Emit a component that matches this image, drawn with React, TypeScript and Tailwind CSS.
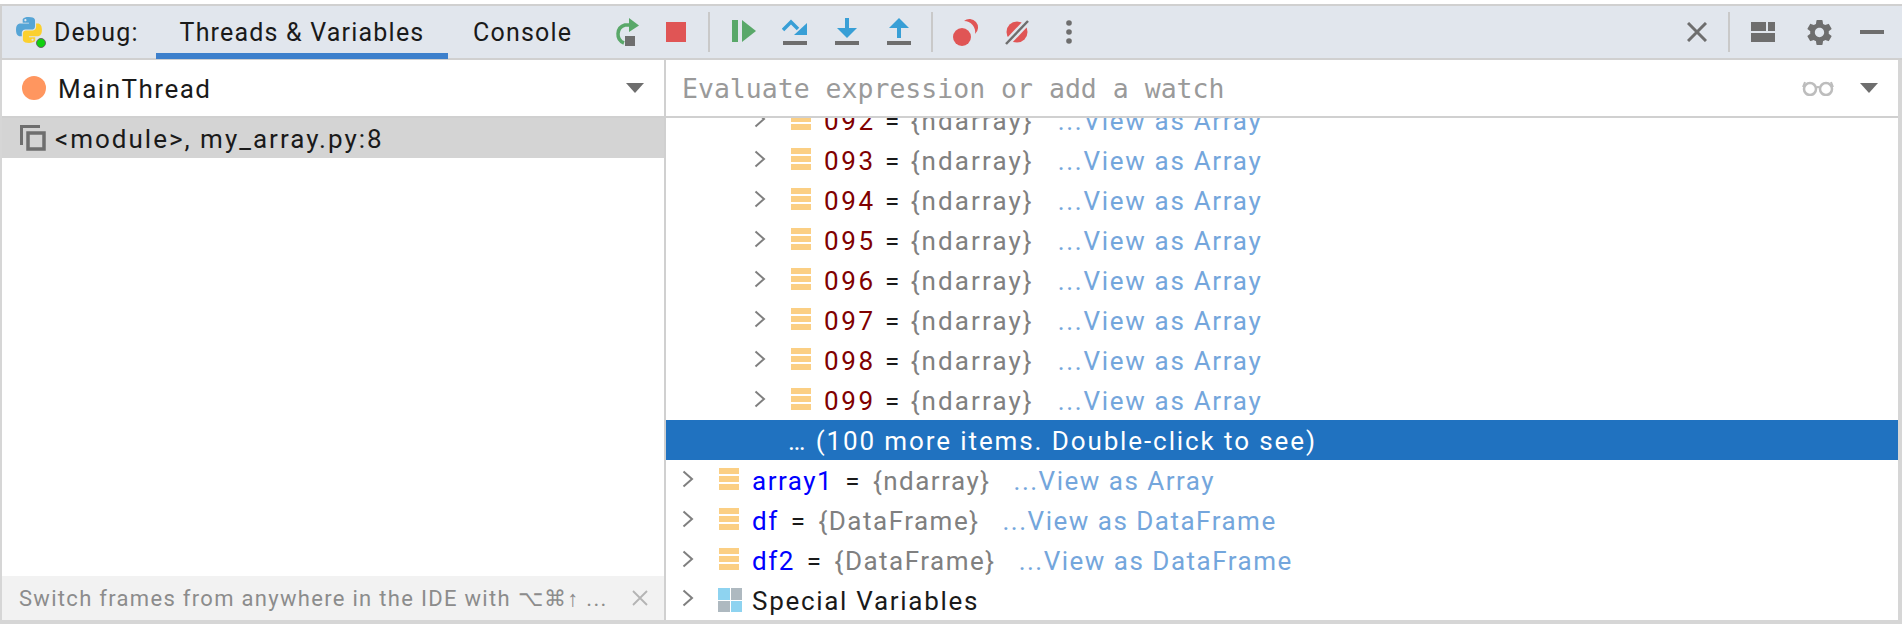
import { MdSettings } from "react-icons/md";

const Chevron = () => (
  <svg width="12" height="18" viewBox="0 0 12 18" className="shrink-0 -mt-[4px]">
    <path d="M1.5 1.5 L10 9 L1.5 16.5" fill="none" stroke="#7f7f7f" strokeWidth="2" />
  </svg>
);

const FieldIcon = () => (
  <div className="flex flex-col gap-[2px] w-5 shrink-0 -mt-[4px]">
    <div className="h-[6px] bg-[#fbcf84]" />
    <div className="h-[6px] bg-[#fbcf84]" />
    <div className="h-[6px] bg-[#fbcf84]" />
  </div>
);

const Triangle = () => (
  <svg width="18" height="10" viewBox="0 0 18 10" className="shrink-0">
    <path d="M0 0 H18 L9 10 Z" fill="#6e6e6e" />
  </svg>
);

const Sep = ({ className }: { className: string }) => <div className={`w-[2px] h-10 bg-[#c9c9c9] shrink-0 ${className}`} />;

const items = ["093", "094", "095", "096", "097", "098", "099"];

const topVars = [
  { name: "array1", type: "{ndarray}", link: "...View as Array" },
  { name: "df", type: "{DataFrame}", link: "...View as DataFrame" },
  { name: "df2", type: "{DataFrame}", link: "...View as DataFrame" },
];

function VarRow({ name, type, link, nameColor, nested }: { name: string; type: string; link: string; nameColor: string; nested?: boolean }) {
  return (
    <div className={`flex items-center h-10 shrink-0 pt-[2px] whitespace-nowrap ${nested ? "pl-[88px]" : "pl-[16px]"}`}>
      <Chevron />
      <div className="ml-[25px]"><FieldIcon /></div>
      <span className={`ml-[13px] ${nameColor} ${nested ? "tracking-[2.7px]" : ""}`}>{name}</span>
      <span className={`text-[#1a1a1a] ${nested ? "ml-[9px]" : "ml-3"}`}>=</span>
      <span className={`text-[#808080] ${nested ? "ml-[10px] tracking-[2.1px]" : "ml-3"}`}>{type}</span>
      <span className={`text-[#74a6dc] ${nested ? "ml-[24px] tracking-[1.7px]" : "ml-[23px]"}`}>{link}</span>
    </div>
  );
}

export default function App() {
  return (
    <div className="w-[1902px] h-[624px] overflow-hidden bg-white pt-1 font-['Roboto',sans-serif] text-[26px] tracking-[1.5px] text-[#1a1a1a] flex flex-col">
      {/* toolbar */}
      <div className="h-14 shrink-0 flex items-center bg-[#e1e6ed] border-y-2 border-y-[#d0d0d0] border-l-2 border-l-[#d0d0d0] text-[25px] tracking-[1.2px] whitespace-nowrap">
        <svg width="30" height="31" viewBox="0 0 30 31" className="ml-[14px] shrink-0">
          <g transform="scale(1.08)">
            <path fillRule="evenodd" fill="#56a5d6" d="M11.9 0C5.8 0 6.2 2.6 6.2 2.6v2.7h5.8v.8H3.9S0 5.7 0 11.9s3.4 6 3.4 6h2v-2.9s-.1-3.4 3.3-3.4h5.7s3.2.1 3.2-3.1V3.2S18.1 0 11.9 0zM8.7 1.9c.6 0 1 .5 1 1s-.5 1-1 1-1-.5-1-1 .4-1 1-1z" />
            <path fillRule="evenodd" fill="#fbd02f" transform="rotate(180 12 12)" d="M11.9 0C5.8 0 6.2 2.6 6.2 2.6v2.7h5.8v.8H3.9S0 5.7 0 11.9s3.4 6 3.4 6h2v-2.9s-.1-3.4 3.3-3.4h5.7s3.2.1 3.2-3.1V3.2S18.1 0 11.9 0zM8.7 1.9c.6 0 1 .5 1 1s-.5 1-1 1-1-.5-1-1 .4-1 1-1z" />
          </g>
          <circle cx="25" cy="26" r="4.5" fill="#10d010" stroke="#666" strokeWidth="1" />
        </svg>
        <span className="ml-[8px] w-[102px] shrink-0 pt-[2px]">Debug:</span>
        <div className="w-[292px] h-[52px] shrink-0 flex items-center justify-center border-b-[6px] border-b-[#3d80cc] pt-[6px] -mb-[2px]">Threads &amp; Variables</div>
        <span className="ml-[25px] w-[97px] shrink-0 pt-[2px]">Console</span>

        <svg width="28" height="28" viewBox="0 0 28 28" className="ml-[41px] shrink-0">
          <path d="M13 25 A9.5 9.5 0 0 1 14 7 H20" fill="none" stroke="#59a869" strokeWidth="3.5" />
          <path d="M18 0 L28 7.5 L18 14 Z" fill="#59a869" />
          <rect x="14" y="18" width="10" height="10" fill="#6e6e6e" />
        </svg>
        <svg width="20" height="20" viewBox="0 0 20 20" className="ml-[27px] shrink-0"><rect width="20" height="20" fill="#e05555" /></svg>
        <Sep className="ml-[22px]" />

        <svg width="24" height="24" viewBox="0 0 24 24" className="ml-[22px] shrink-0">
          <rect x="0" y="0" width="6" height="22" fill="#59a869" />
          <path d="M10 0 L24 11 L10 22 Z" fill="#59a869" />
        </svg>
        <svg width="26" height="28" viewBox="0 0 26 28" className="ml-[26px] shrink-0">
          <path d="M1 12 L9 4 L16 11" fill="none" stroke="#389fd6" strokeWidth="3.5" />
          <path d="M25 5 V17 H12 Z" fill="#389fd6" />
          <rect x="1" y="23" width="24" height="4" fill="#6e6e6e" />
        </svg>
        <svg width="24" height="28" viewBox="0 0 24 28" className="ml-[27px] shrink-0">
          <rect x="10" y="0" width="4" height="12" fill="#389fd6" />
          <path d="M2 10 H22 L12 20 Z" fill="#389fd6" />
          <rect x="0" y="23" width="24" height="4" fill="#6e6e6e" />
        </svg>
        <svg width="24" height="28" viewBox="0 0 24 28" className="ml-[28px] shrink-0">
          <path d="M2 10 H22 L12 0 Z" fill="#389fd6" />
          <rect x="10" y="8" width="4" height="12" fill="#389fd6" />
          <rect x="0" y="23" width="24" height="4" fill="#6e6e6e" />
        </svg>
        <Sep className="ml-[20px]" />

        <svg width="26" height="28" viewBox="0 0 26 28" className="ml-[20px] shrink-0">
          <path d="M11 3 A8 8 0 1 1 22 16 A11 11 0 0 0 11 3 Z" fill="#e05555" />
          <circle cx="9" cy="19" r="9" fill="#e05555" />
        </svg>
        <svg width="24" height="26" viewBox="0 0 24 26" className="ml-[26px] shrink-0">
          <circle cx="12" cy="13" r="10.5" fill="#e05555" />
          <path d="M2 24 L22 3" stroke="#e1e6ed" strokeWidth="7" />
          <path d="M1 25 L23 2" stroke="#6e6e6e" strokeWidth="2.5" />
        </svg>
        <svg width="6" height="24" viewBox="0 0 6 24" className="ml-[37px] shrink-0">
          <circle cx="3" cy="3" r="2.8" fill="#6e6e6e" />
          <circle cx="3" cy="12" r="2.8" fill="#6e6e6e" />
          <circle cx="3" cy="21" r="2.8" fill="#6e6e6e" />
        </svg>

        <svg width="20" height="20" viewBox="0 0 20 20" className="ml-auto shrink-0">
          <path d="M1 1 L19 19 M19 1 L1 19" stroke="#6e6e6e" strokeWidth="3" />
        </svg>
        <Sep className="ml-[21px]" />
        <svg width="24" height="20" viewBox="0 0 24 20" className="ml-[21px] shrink-0">
          <rect x="0" y="0" width="15" height="9" fill="#6e6e6e" />
          <rect x="17" y="0" width="7" height="9" fill="#6e6e6e" />
          <rect x="0" y="11" width="24" height="9" fill="#6e6e6e" />
        </svg>
        <MdSettings className="ml-[29px] shrink-0 text-[#6e6e6e]" size={31} />
        <div className="ml-[25px] mr-[18px] w-6 h-1 bg-[#6e6e6e] shrink-0" />
      </div>

      <div className="flex-1 min-h-0 flex border-l-2 border-r-4 border-b-4 border-[#d6d6d6] whitespace-nowrap">
        {/* frames */}
        <div className="w-[664px] shrink-0 flex flex-col border-r-2 border-r-[#d0d0d0]">
          <div className="h-[58px] shrink-0 flex items-center border-b-2 border-b-[#d0d0d0] pl-5 pr-[20px]">
            <div className="w-6 h-6 rounded-full bg-[#ff965f] shrink-0" />
            <span className="ml-[12px] pt-[2px]">MainThread</span>
            <div className="ml-auto"><Triangle /></div>
          </div>
          <div className="h-10 shrink-0 flex items-center bg-[#d4d4d4] pl-[18px]">
            <svg width="26" height="26" viewBox="0 0 26 26" className="shrink-0">
              <path d="M1.5 20 V1.5 H20" fill="none" stroke="#6e6e6e" strokeWidth="3" />
              <rect x="8" y="8" width="16" height="16" fill="none" stroke="#6e6e6e" strokeWidth="3.5" />
            </svg>
            <span className="ml-[9px] pt-[2px] tracking-[2px]">&lt;module&gt;, my_array.py:8</span>
          </div>
          <div className="flex-1" />
          <div className="h-11 shrink-0 flex items-center bg-[#f2f2f2] pl-[17px] pr-[16px] text-[22px] tracking-[1.3px] text-[#8c8c8c]">
            <span>Switch frames from anywhere in the IDE with ⌥⌘↑ ...</span>
            <svg width="16" height="16" viewBox="0 0 16 16" className="ml-auto shrink-0">
              <path d="M1 1 L15 15 M15 1 L1 15" stroke="#b4b4b4" strokeWidth="1.8" />
            </svg>
          </div>
        </div>

        {/* variables */}
        <div className="flex-1 min-w-0 flex flex-col">
          <div className="h-[58px] shrink-0 flex items-center border-b-2 border-b-[#d0d0d0] pl-[16px] pr-[20px]">
            <span className="font-['DejaVu_Sans_Mono',monospace] text-[26.5px] tracking-normal text-[#9a9a9a] pt-[2px]">Evaluate expression or add a watch</span>
            <svg width="32" height="16" viewBox="0 0 32 16" className="ml-auto shrink-0">
              <circle cx="8" cy="9" r="6" fill="none" stroke="#bdbdbd" strokeWidth="2.5" />
              <circle cx="24" cy="9" r="6" fill="none" stroke="#bdbdbd" strokeWidth="2.5" />
              <path d="M14 8 Q16 6 18 8 M1 7 L3 2 M31 7 L29 2" fill="none" stroke="#bdbdbd" strokeWidth="2" />
            </svg>
            <div className="ml-[26px]"><Triangle /></div>
          </div>
          <div className="flex-1 min-h-0 overflow-hidden flex flex-col">
            <div className="-mt-[18px] flex flex-col">
              <VarRow nested name="092" type="{ndarray}" link="...View as Array" nameColor="text-[#800000]" />
              {items.map((n) => (
                <VarRow key={n} nested name={n} type="{ndarray}" link="...View as Array" nameColor="text-[#800000]" />
              ))}
              <div className="h-10 shrink-0 flex items-center bg-[#2072c0] text-white pl-[122px] pt-[2px] tracking-[1.9px]">… (100 more items. Double-click to see)</div>
              {topVars.map((v) => (
                <VarRow key={v.name} name={v.name} type={v.type} link={v.link} nameColor="text-[#0000ff]" />
              ))}
              <div className="flex items-center h-10 shrink-0 pl-[16px]">
                <Chevron />
                <div className="ml-[24px] grid grid-cols-2 gap-[1px] w-6 h-6 shrink-0">
                  <div className="bg-[#8ed3f0]" />
                  <div className="bg-[#aeb9c0]" />
                  <div className="bg-[#aeb9c0]" />
                  <div className="bg-[#8ed3f0]" />
                </div>
                <span className="ml-[10px] pt-[2px] tracking-[1.7px]">Special Variables</span>
              </div>
            </div>
          </div>
        </div>
      </div>
    </div>
  );
}
